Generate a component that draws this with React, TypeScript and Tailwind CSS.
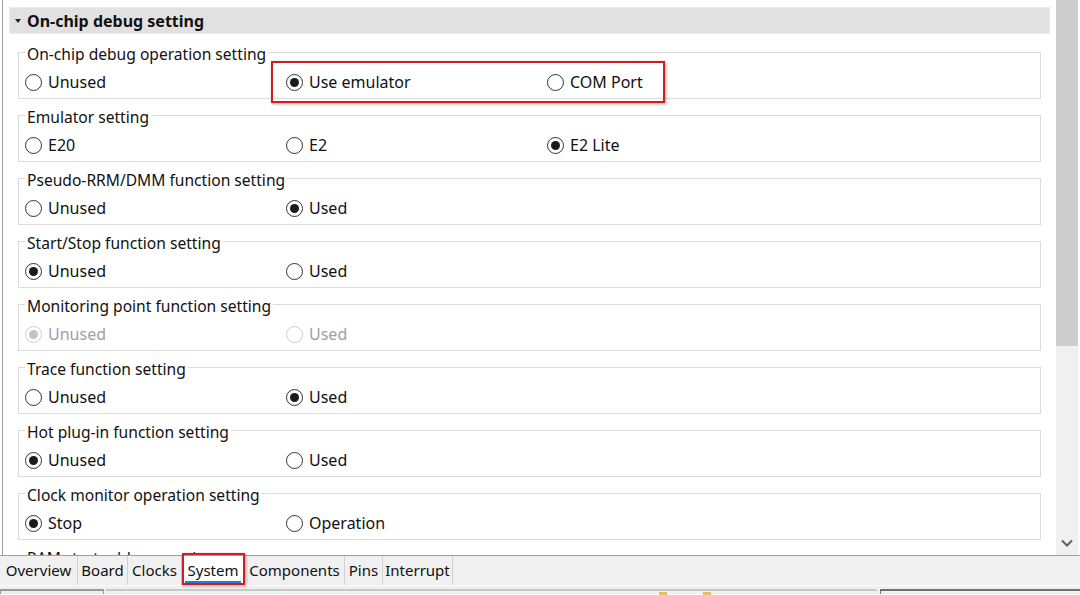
import React from 'react';

type Opt = { label: string; checked?: boolean };
type Group = { title: string; options: Opt[]; disabled?: boolean };

const groups: Group[] = [
  { title: 'On-chip debug operation setting', options: [{ label: 'Unused' }, { label: 'Use emulator', checked: true }, { label: 'COM Port' }] },
  { title: 'Emulator setting', options: [{ label: 'E20' }, { label: 'E2' }, { label: 'E2 Lite', checked: true }] },
  { title: 'Pseudo-RRM/DMM function setting', options: [{ label: 'Unused' }, { label: 'Used', checked: true }] },
  { title: 'Start/Stop function setting', options: [{ label: 'Unused', checked: true }, { label: 'Used' }] },
  { title: 'Monitoring point function setting', disabled: true, options: [{ label: 'Unused', checked: true }, { label: 'Used' }] },
  { title: 'Trace function setting', options: [{ label: 'Unused' }, { label: 'Used', checked: true }] },
  { title: 'Hot plug-in function setting', options: [{ label: 'Unused', checked: true }, { label: 'Used' }] },
  { title: 'Clock monitor operation setting', options: [{ label: 'Stop', checked: true }, { label: 'Operation' }] },
  { title: 'RAM start address setting', options: [{ label: 'Default' }] },
];

const tabs = [
  { name: 'Overview', w: 'w-[78px]' },
  { name: 'Board', w: 'w-[50px]' },
  { name: 'Clocks', w: 'w-[54px]' },
  { name: 'System', w: 'w-[63px]', active: true },
  { name: 'Components', w: 'w-[100px]' },
  { name: 'Pins', w: 'w-[38px]' },
  { name: 'Interrupt', w: 'w-[70px]' },
];

function Radio({ label, checked, disabled }: Opt & { disabled?: boolean }) {
  return (
    <div className="w-[261px] flex items-center gap-[6px] h-[20px]">
      <span
        className={
          'w-[17px] h-[17px] rounded-full border flex items-center justify-center bg-white shrink-0 ' +
          (disabled ? 'border-[#cccccc]' : 'border-[#333333]')
        }
      >
        {checked && (
          <span className={'w-[9px] h-[9px] rounded-full ' + (disabled ? 'bg-[#c4c4c4]' : 'bg-[#1a1a1a]')} />
        )}
      </span>
      <span className={disabled ? 'text-[#a0a0a0]' : 'text-[#111]'}>{label}</span>
    </div>
  );
}

export default function App() {
  return (
    <div className="relative w-[1080px] h-[595px] overflow-hidden bg-white text-[16px] leading-[20px] font-['Noto_Sans',sans-serif]">
      {/* property panel + scrollbar */}
      <div className="flex h-[555px]">
        <div className="w-[1056px] h-full overflow-hidden">
          <div className="ml-[2px] h-full border-l border-[#a0a0a0] pt-[7px]">
            {/* section header */}
            <div className="ml-[6px] w-[1041px] h-[27px] bg-[#e1e1e1] border border-[#ececec] flex items-center pl-[5px] gap-[6px]">
              <svg width="6" height="4" viewBox="0 0 6 4" className="mt-[1px]">
                <polygon points="0,0 6,0 3,4" fill="#222" />
              </svg>
              <span className="font-bold text-[#111]">On-chip debug setting</span>
            </div>

            <div className="ml-[15px] w-[1023px] mt-[8px] flex flex-col gap-[6px]">
              {groups.map((g) => (
                <fieldset key={g.title} className="border border-[#dcdcdc] pl-[6px] pb-[6px]">
                  <legend className="px-[2px] text-[#111] text-[15.6px]">
                    <span className="relative top-[2px]">{g.title}</span>
                  </legend>
                  <div className="flex pt-[10px]">
                    {g.options.map((o) => (
                      <Radio key={o.label} {...o} disabled={g.disabled} />
                    ))}
                  </div>
                </fieldset>
              ))}
            </div>
          </div>
        </div>

        {/* vertical scrollbar */}
        <div className="w-[22px] h-full bg-[#f0f0f0] flex flex-col">
          <div className="h-[346px] bg-[#cdcdcd]" />
          <div className="flex-1" />
          <div className="h-[18px] mb-[3px] flex items-center justify-center">
            <svg width="12" height="8" viewBox="0 0 12 8">
              <polyline points="1,1.5 6,6.5 11,1.5" fill="none" stroke="#606060" strokeWidth="2" />
            </svg>
          </div>
        </div>
        <div className="w-[2px]" />
      </div>

      {/* tab strip */}
      <div className="h-[31px] border-t border-[#a0a0a0] bg-[#f0f0f0] flex border-b border-b-[#fbfbfb] text-[15px]">
        {tabs.map((t) => (
          <div
            key={t.name}
            className={
              'relative h-full flex items-center justify-center border-r border-[#d0d0d0] text-[#111] ' +
              t.w +
              (t.active ? ' bg-white' : '')
            }
          >
            <span className="-mt-[1px]">{t.name}</span>
            {t.active && <span className="absolute left-[3px] right-[3px] bottom-[2px] h-[2px] bg-[#1c7ed6]" />}
          </div>
        ))}
      </div>

      {/* lower panel edges */}
      <div className="h-[8px] bg-[#f0f0f0] flex items-end pt-[3px]">
        <div className="w-[104px] h-[5px] border-t-2 border-x border-[#9a9a9a] bg-[#ececec]" />
        <div className="w-[771px] h-[5px] border-t-2 border-[#c8c8c8] ml-[2px] relative">
          <span className="absolute left-[553px] top-[1px] w-[8px] h-[3px] bg-[#e0c060]" />
          <span className="absolute left-[597px] top-[1px] w-[8px] h-[3px] bg-[#e0c060]" />
        </div>
        <div className="flex-1 h-[5px] border-t-2 border-l border-[#707070] ml-[3px]" />
      </div>

      {/* red highlight boxes */}
      <div className="absolute left-[271px] top-[61px] w-[394px] h-[42px] border-2 border-[#d21c24] shadow-[1px_1px_3px_rgba(0,0,0,0.35)]" />
      <div className="absolute left-[182px] top-[553px] w-[63px] h-[32px] border-2 border-[#d21c24] shadow-[1px_1px_3px_rgba(0,0,0,0.35)]" />
    </div>
  );
}
